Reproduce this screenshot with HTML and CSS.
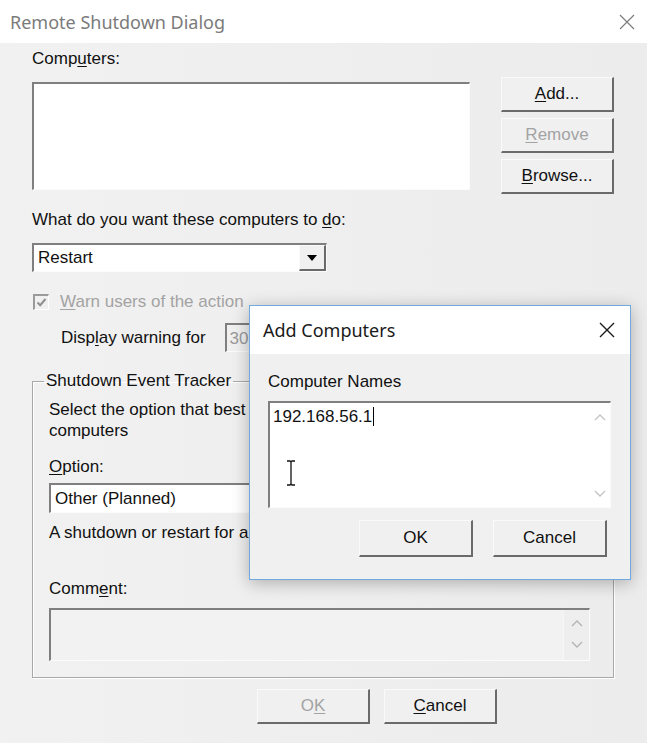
FILE: index.html
```html
<!DOCTYPE html>
<html>
<head>
<meta charset="utf-8">
<title>Remote Shutdown Dialog</title>
<link rel="stylesheet" href="styles.css">
</head>
<body>
<div class="window">
  <div class="titlebar">
    <span class="title">Remote Shutdown Dialog</span>
    <svg class="close" width="16" height="16" viewBox="0 0 16 16"><path d="M1 1 L15 15 M15 1 L1 15" stroke="#7d7d7d" stroke-width="1.2" fill="none"/></svg>
  </div>
  <div class="content">
    <div class="label">Comp<u>u</u>ters:</div>
    <div class="computers-row">
      <div class="listbox sunken"></div>
      <div class="side-buttons">
        <div class="btn"><span><u>A</u>dd...</span></div>
        <div class="btn disabled"><span><u>R</u>emove</span></div>
        <div class="btn"><span><u>B</u>rowse...</span></div>
      </div>
    </div>
    <div class="label action-label">What do you want these computers to <u>d</u>o:</div>
    <div class="combo sunken">
      <span class="combo-text">Restart</span>
      <span class="combo-arrow"><svg width="10" height="6" viewBox="0 0 10 6"><path d="M0 0 H10 L5 6 Z" fill="#000"/></svg></span>
    </div>
    <div class="check-row">
      <span class="checkbox"><svg width="13" height="13" viewBox="0 0 13 13"><path d="M2.5 6.5 L5.2 9.2 L10.5 3" stroke="#8f8f8f" stroke-width="2" fill="none"/></svg></span>
      <span class="disabled-text"><u>W</u>arn users of the action</span>
    </div>
    <div class="warn-row">
      <span>Disp<u>l</u>ay warning for</span>
      <div class="num sunken">30</div>
    </div>
    <fieldset class="group">
      <legend>Shutdown Event Tracker</legend>
      <div class="desc">Select the option that best describes why you want to shut down these<br>computers</div>
      <div class="label opt-label"><u>O</u>ption:</div>
      <div class="combo wide sunken"><span class="combo-text">Other (Planned)</span></div>
      <div class="label reason">A shutdown or restart for an unidentified reason</div>
      <div class="label comment-label">Comm<u>e</u>nt:</div>
      <div class="comment sunken">
        <div class="scroll-col">
          <svg width="12" height="7" viewBox="0 0 12 7"><path d="M1 6 L6 1 L11 6" stroke="#b4b4b4" stroke-width="1.4" fill="none"/></svg>
          <svg width="12" height="7" viewBox="0 0 12 7"><path d="M1 1 L6 6 L11 1" stroke="#b4b4b4" stroke-width="1.4" fill="none"/></svg>
        </div>
      </div>
    </fieldset>
    <div class="bottom-buttons">
      <div class="btn bottom disabled"><span>O<u>K</u></span></div>
      <div class="btn bottom"><span><u>C</u>ancel</span></div>
    </div>
  </div>

  <div class="dialog">
    <div class="dlg-title">
      <span class="dlg-title-text">Add Computers</span>
      <svg class="dlg-close" width="16" height="16" viewBox="0 0 16 16"><path d="M1 1 L15 15 M15 1 L1 15" stroke="#1a1a1a" stroke-width="1.4" fill="none"/></svg>
    </div>
    <div class="dlg-body">
      <div class="label">Computer Names</div>
      <div class="names sunken">
        <div class="names-text">192.168.56.1<span class="caret"></span></div>
        <div class="names-scroll">
          <svg width="12" height="7" viewBox="0 0 12 7"><path d="M1 6 L6 1 L11 6" stroke="#c4c4c4" stroke-width="1.4" fill="none"/></svg>
          <svg width="12" height="7" viewBox="0 0 12 7"><path d="M1 1 L6 6 L11 1" stroke="#c4c4c4" stroke-width="1.4" fill="none"/></svg>
        </div>
        <svg class="ibeam" width="10" height="26" viewBox="0 0 10 26"><path d="M1 1 H4 Q5 1 5 3 V23 Q5 25 4 25 H1 M9 1 H6 Q5 1 5 3 M5 23 Q5 25 6 25 H9" stroke="#111" stroke-width="1.3" fill="none"/></svg>
      </div>
      <div class="dlg-buttons">
        <div class="btn dlg-btn"><span>OK</span></div>
        <div class="btn dlg-btn"><span>Cancel</span></div>
      </div>
    </div>
  </div>
</div>
</body>
</html>
```

FILE: styles.css
```css
* { box-sizing: border-box; }
html, body { margin: 0; padding: 0; }
body {
  width: 647px;
  height: 743px;
  overflow: hidden;
  background: #f0f0f0;
  font-family: "Liberation Sans", Arial, sans-serif;
  font-size: 17px;
  color: #111;
}
u { text-decoration: underline; text-underline-offset: 2px; text-decoration-thickness: 1px; }

.window {
  position: relative;
  width: 647px;
  height: 743px;
  background: linear-gradient(90deg, #f1f1f1, #ececec);
}

.titlebar {
  height: 43px;
  background: #fff;
  display: flex;
  align-items: center;
  justify-content: space-between;
  padding: 0 12px 0 10px;
}
.title {
  font-family: "Noto Sans", sans-serif;
  font-size: 18px;
  color: #7b7b7b;
}

.content { padding: 6px 33px 0 32px; }
.label { line-height: 20px; height: 20px; white-space: nowrap; }

.sunken {
  border-style: solid;
  border-width: 2px 1px 1px 2px;
  border-color: #7f7f7f #fbfbfb #fbfbfb #7f7f7f;
}

.computers-row {
  display: flex;
  align-items: flex-start;
  gap: 31px;
  margin-top: 8px;
}
.listbox {
  width: 438px;
  height: 108px;
  margin-top: 5px;
  background: #fff;
}
.side-buttons {
  display: flex;
  flex-direction: column;
  gap: 6px;
}

.btn {
  width: 113px;
  height: 35px;
  display: flex;
  align-items: center;
  justify-content: center;
  background: #f0f0f0;
  border-style: solid;
  border-width: 1px 2px 2px 1px;
  border-color: #fafafa #6a6a6a #6a6a6a #fafafa;
  white-space: nowrap;
}
.btn.disabled { color: #a3a3a3; }

.action-label { margin-top: 16px; }

.combo {
  position: relative;
  width: 295px;
  height: 29px;
  margin-top: 13px;
  background: #fff;
  display: flex;
  align-items: center;
  justify-content: space-between;
}
.combo-text { padding-left: 4px; }
.combo-arrow {
  width: 27px;
  height: 26px;
  display: flex;
  align-items: center;
  justify-content: center;
  background: #f0f0f0;
  border-style: solid;
  border-width: 1px 2px 2px 1px;
  border-color: #fafafa #6a6a6a #6a6a6a #fafafa;
}

.check-row {
  display: flex;
  align-items: center;
  gap: 11px;
  margin-top: 20px;
  height: 20px;
  padding-left: 1px;
}
.checkbox {
  width: 16px;
  height: 16px;
  display: flex;
  align-items: center;
  justify-content: center;
  border-style: solid;
  border-width: 2px 1px 1px 2px;
  border-color: #9a9a9a #fff #fff #9a9a9a;
  background: #f0f0f0;
}
.disabled-text { color: #a3a3a3; }

.warn-row {
  display: flex;
  align-items: center;
  gap: 19px;
  margin-top: 11px;
  padding-left: 29px;
}
.num {
  width: 46px;
  height: 29px;
  padding: 4px 0 0 3px;
  color: #9a9a9a;
  background: #f0f0f0;
}

.group {
  margin: 19px 0 0 0;
  padding: 8px 23px 16px 16px;
  border: 1px solid #a9a9a9;
  box-shadow: inset 1px 1px 0 #fff, 1px 1px 0 #fff;
  min-width: 0;
}
.group legend {
  padding: 0 2px;
  margin-left: -5px;
  line-height: 20px;
}
.desc { line-height: 21px; white-space: nowrap; }
.opt-label { margin-top: 16px; }
.combo.wide {
  width: 100%;
  height: 30px;
  margin-top: 6px;
}
.reason { margin-top: 10px; }
.comment-label { margin-top: 36px; }
.comment {
  height: 53px;
  margin-top: 9px;
  background: #f2f2f2;
  display: flex;
  justify-content: flex-end;
}
.scroll-col {
  width: 26px;
  display: flex;
  flex-direction: column;
  align-items: center;
  justify-content: space-between;
  padding: 10px 0 12px;
  background: #eeeeee;
  border-left: 1px solid #f6f6f6;
}

.bottom-buttons {
  display: flex;
  gap: 14px;
  margin-top: 11px;
  padding-left: 225px;
}
.btn.bottom { width: 113px; height: 35px; }

/* Add Computers overlay dialog */
.dialog {
  position: absolute;
  left: 249px;
  top: 305px;
  width: 382px;
  height: 275px;
  border: 1px solid #6fa9df;
  background: #f0f0f0;
  box-shadow: 0 3px 16px rgba(0, 0, 0, 0.28);
  display: flex;
  flex-direction: column;
}
.dlg-title {
  height: 48px;
  background: #fff;
  display: flex;
  align-items: center;
  justify-content: space-between;
  padding: 0 15px 0 13px;
}
.dlg-title-text {
  font-family: "Noto Sans", sans-serif;
  font-size: 18px;
  color: #1a1a1a;
}
.dlg-body { padding: 18px 19px 0 18px; }
.names {
  position: relative;
  height: 107px;
  margin-top: 9px;
  background: #fff;
  display: flex;
  justify-content: space-between;
}
.names-text {
  padding: 4px 0 0 3px;
  line-height: 20px;
  display: flex;
  align-items: flex-start;
}
.caret {
  display: inline-block;
  width: 1px;
  height: 19px;
  margin-left: 1px;
  background: #000;
}
.names-scroll {
  width: 20px;
  display: flex;
  flex-direction: column;
  align-items: center;
  justify-content: space-between;
  padding: 11px 0 10px;
}
.ibeam {
  position: absolute;
  left: 16px;
  top: 57px;
}
.dlg-buttons {
  display: flex;
  justify-content: flex-end;
  gap: 20px;
  margin-top: 12px;
  padding-right: 4px;
}
.btn.dlg-btn { width: 114px; height: 37px; }
```
